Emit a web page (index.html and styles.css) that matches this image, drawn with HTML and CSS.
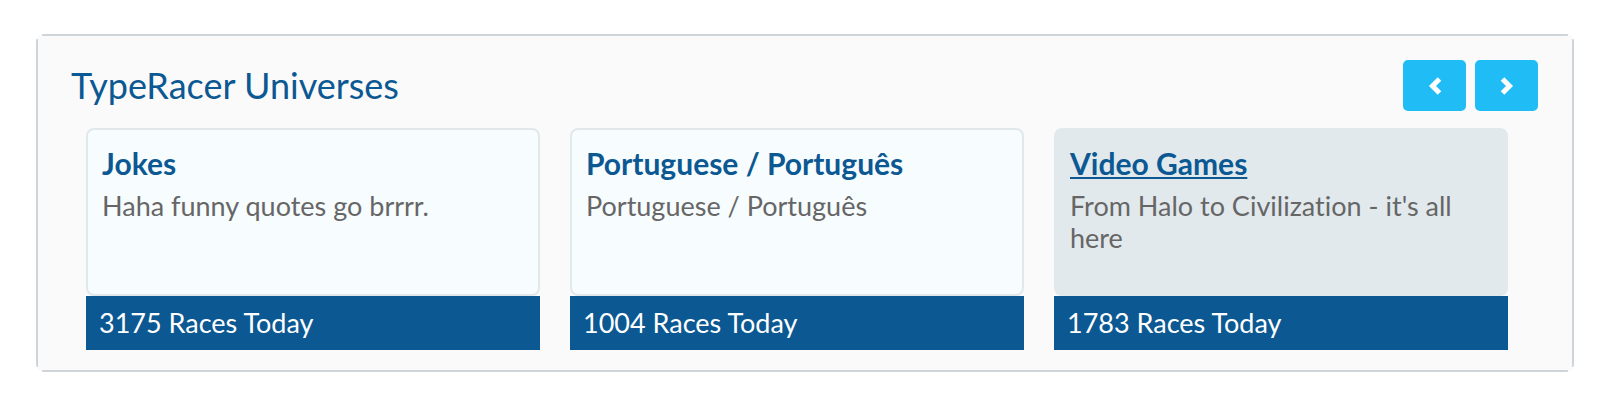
FILE: index.html
```html
<!DOCTYPE html>
<html lang="en">
<head>
<meta charset="utf-8">
<title>TypeRacer Universes</title>
<link rel="stylesheet" href="styles.css">
</head>
<body>
<section class="panel">
  <header class="head">
    <h1 class="title">TypeRacer Universes</h1>
    <div class="nav">
      <button class="arrow" type="button" aria-label="Previous"><svg viewBox="0 0 14 18" width="14" height="18"><path d="M11.500 2 4.500 9l7 7"/></svg></button>
      <button class="arrow" type="button" aria-label="Next"><svg viewBox="0 0 14 18" width="14" height="18"><path d="m2.500 2 7 7-7 7"/></svg></button>
    </div>
  </header>
  <div class="cards">
    <article class="card">
      <div class="body"><h2 class="name"><a href="#jokes">Jokes</a></h2><p class="text">Haha funny quotes go brrrr.</p></div>
      <div class="races">3175 Races Today</div>
    </article>
    <article class="card">
      <div class="body"><h2 class="name"><a href="#portuguese">Portuguese / Português</a></h2><p class="text">Portuguese / Português</p></div>
      <div class="races">1004 Races Today</div>
    </article>
    <article class="card active">
      <div class="body"><h2 class="name"><a href="#games">Video Games</a></h2><p class="text">From Halo to Civilization - it's all here</p></div>
      <div class="races">1783 Races Today</div>
    </article>
  </div>
</section>
</body>
</html>
```
FILE: styles.css
```css
* { box-sizing: border-box; }
body { margin: 0; padding: 34px 26px 30px 36px; background: #fff; font-family: Lato, sans-serif; font-variant-ligatures: none; }
/* The edge lines stop short of the rounded corners. */
.panel {
  --line: linear-gradient(#cdd4da, #cdd4da);
  padding: 26px 36px 22px 35px;
  border-radius: 8px;
  background:
    var(--line) center top / calc(100% - 12px) 2px no-repeat,
    var(--line) center bottom / calc(100% - 12px) 2px no-repeat,
    var(--line) left center / 2px calc(100% - 10px) no-repeat,
    var(--line) right center / 2px calc(100% - 10px) no-repeat,
    #fafafa;
}
.head { display: flex; justify-content: space-between; align-items: flex-start; }
.title { margin: 0; color: #0b5892; font-size: 36px; font-weight: 400; line-height: 50px; }
.nav { display: flex; gap: 9px; }
.arrow { display: flex; align-items: center; justify-content: center; width: 63px; height: 51px; padding: 0; border: 0; border-radius: 5px; background: #1fbcf5; }
.arrow svg { overflow: visible; }
.arrow path { fill: none; stroke: #fff; stroke-width: 5; }
.cards { display: grid; grid-template-columns: repeat(3, 1fr); gap: 30px; margin-top: 17px; padding: 0 30px 0 15px; }
.card { display: flex; flex-direction: column; }
.body { flex: 1; min-height: 168px; padding: 15px 14px; border: 2px solid #e1e8ec; border-radius: 8px; background: #f7fcff; }
.name { margin: 0; font-size: 30px; line-height: 36px; }
.name a { color: #0b5892; text-decoration: none; }
.text { margin: 9px 0 0; color: #666; font-size: 27px; line-height: 32px; }
.races { padding: 0 13px; background: #0b5892; color: #fff; font-size: 27px; line-height: 54px; }
.active .body { background: #e1e9ed; border-color: #e1e9ed; }
.active .name a { text-decoration: underline; text-decoration-thickness: 2px; text-underline-offset: 2px; text-decoration-skip-ink: none; }
```
